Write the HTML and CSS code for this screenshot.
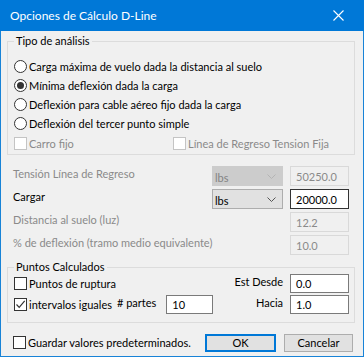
FILE: index.html
```html
<!DOCTYPE html>
<html lang="es">
<head>
<meta charset="utf-8">
<title>Opciones de Cálculo D-Line</title>
<link rel="stylesheet" href="styles.css">
</head>
<body>
<div class="win">
  <div class="titlebar">
    <span class="title">Opciones de Cálculo D-Line</span>
    <svg class="close" width="11" height="11" viewBox="0 0 11 11"><path d="M0.5 0.5 L10.5 10.5 M10.5 0.5 L0.5 10.5" stroke="#fff" stroke-width="1.1" fill="none"/></svg>
  </div>
  <div class="body">
    <fieldset class="group g1">
      <legend>Tipo de análisis</legend>
      <div class="opt"><span class="radio"></span><span>Carga máxima de vuelo dada la distancia al suelo</span></div>
      <div class="opt"><span class="radio on"></span><span>Mínima deflexión dada la carga</span></div>
      <div class="opt"><span class="radio"></span><span>Deflexión para cable aéreo fijo dada la carga</span></div>
      <div class="opt"><span class="radio"></span><span>Deflexión del tercer punto simple</span></div>
      <div class="checks">
        <div class="opt dis w1"><span class="box"></span><span>Carro fijo</span></div>
        <div class="opt dis"><span class="box"></span><span>Línea de Regreso Tension Fija</span></div>
      </div>
    </fieldset>

    <div class="fields">
      <span class="lbl dis">Tensión Línea de Regreso</span>
      <div class="combo dis"><span>lbs</span><svg width="9" height="5" viewBox="0 0 9 5"><path d="M0.5 0.5 L4.5 4.5 L8.5 0.5" stroke="#b4b4b4" fill="none"/></svg></div>
      <div class="input dis">50250.0</div>

      <span class="lbl">Cargar</span>
      <div class="combo"><span>lbs</span><svg width="9" height="5" viewBox="0 0 9 5"><path d="M0.5 0.5 L4.5 4.5 L8.5 0.5" stroke="#555" fill="none"/></svg></div>
      <div class="input focus">20000.0</div>

      <span class="lbl dis span2">Distancia al suelo (luz)</span>
      <div class="input dis">12.2</div>

      <span class="lbl dis span2">% de deflexión (tramo medio equivalente)</span>
      <div class="input dis">10.0</div>
    </div>

    <fieldset class="group g2">
      <legend>Puntos Calculados</legend>
      <div class="prow">
        <div class="opt grow"><span class="box"></span><span>Puntos de ruptura</span></div>
        <span class="plbl">Est Desde</span>
        <div class="input">0.0</div>
      </div>
      <div class="prow">
        <div class="opt clip"><span class="box"><svg width="11" height="11" viewBox="0 0 11 11"><path d="M1.5 5.5 L4.2 8.3 L9.7 1.8" stroke="#333" stroke-width="1.2" fill="none"/></svg></span><span>intervalos iguales</span></div>
        <span class="plbl">#&nbsp;partes</span>
        <div class="input small">10</div>
        <span class="plbl grow right">Hacia</span>
        <div class="input">1.0</div>
      </div>
    </fieldset>

    <div class="footer">
      <div class="opt grow"><span class="box"></span><span>Guardar valores predeterminados.</span></div>
      <button class="btn default">OK</button>
      <button class="btn">Cancelar</button>
    </div>
  </div>
</div>
</body>
</html>
```

FILE: styles.css
```css
* { box-sizing: border-box; }
html, body { margin: 0; padding: 0; }
body {
  background: #ffffff;
  font-family: Lato, "Noto Sans", sans-serif;
  font-size: 11px;
  color: #000;
}
.win {
  width: 364px;
  height: 357px;
  display: flex;
  flex-direction: column;
}
.titlebar {
  height: 31px;
  background: #0078d7;
  color: #fff;
  display: flex;
  align-items: center;
  justify-content: space-between;
  padding: 0 20px 0 10px;
  font-size: 12px;
}
.body {
  flex: 1;
  background: #f0f0f0;
  border: 1px solid #1883d7;
  border-top: 0;
  padding: 2px 8px 0 6px;
}
.group {
  margin: 0;
  border: 1px solid #dcdcdc;
  min-width: 0;
}
.group legend {
  padding: 0 2px;
  line-height: 16px;
}
.g1 { padding: 8px 5px 1px 6px; }
.g2 { margin-top: 5px; padding: 0 5px 6px 6px; }
.g2 legend { line-height: 14px; }

.opt {
  display: flex;
  align-items: center;
  height: 19px;
  gap: 2px;
  white-space: nowrap;
}
.radio {
  width: 13px;
  height: 13px;
  border: 1px solid #333;
  border-radius: 50%;
  background: #fff;
  display: flex;
  align-items: center;
  justify-content: center;
  flex: none;
}
.radio.on::after {
  content: "";
  width: 7px;
  height: 7px;
  border-radius: 50%;
  background: #333;
}
.box {
  width: 13px;
  height: 13px;
  border: 1px solid #333;
  background: #fff;
  flex: none;
  display: flex;
  align-items: center;
  justify-content: center;
}
.checks { display: flex; margin-top: 1px; }
.w1 { width: 159px; }
.dis { color: #8a8a8a; }
.opt.dis .box { border-color: #c4c4c4; }

.fields {
  display: grid;
  grid-template-columns: 1fr 71px 59px;
  column-gap: 7px;
  row-gap: 3px;
  margin-top: 11px;
  padding: 0 6px 0 6px;
}
.lbl { line-height: 16px; align-self: start; white-space: nowrap; }
.span2 { grid-column: 1 / 3; }
.combo {
  height: 20px;
  border: 1px solid #adadad;
  background: #e1e1e1;
  display: flex;
  align-items: center;
  justify-content: space-between;
  padding: 0 6px 0 2px;
}
.combo span { padding-top: 2px; }
.combo.dis { background: #cccccc; border-color: #cccccc; color: #838383; }
.input {
  height: 20px;
  border: 1px solid #7a7a7a;
  background: #fff;
  padding: 0 5px;
  display: flex;
  align-items: center;
}
.input.dis { background: #f0f0f0; border-color: #d9d9d9; color: #8a8a8a; }
.input.focus { border-color: #333; }

.prow {
  display: flex;
  align-items: flex-start;
  margin-bottom: 2px;
}
.prow .input { width: 59px; height: 19px; flex: none; }
.prow .input.small { width: 47px; margin-left: 3px; }
.plbl { line-height: 16px; white-space: nowrap; margin-right: 7px; }
.plbl.right { text-align: right; }
.prow .opt { height: 19px; }
.grow { flex: 1; min-width: 0; }
.clip { width: 103px; flex: none; overflow: hidden; }

.footer {
  display: flex;
  align-items: center;
  margin-top: 10px;
  padding: 0 2px 0 6px;
}
.btn {
  font: inherit;
  color: #000;
  height: 18px;
  padding: 0;
  background: #e1e1e1;
  border: 1px solid #adadad;
  width: 69px;
  margin-left: 8px;
  flex: none;
}
.btn.default { width: 71px; border: 2px solid #0078d7; margin-left: 0; }
```
